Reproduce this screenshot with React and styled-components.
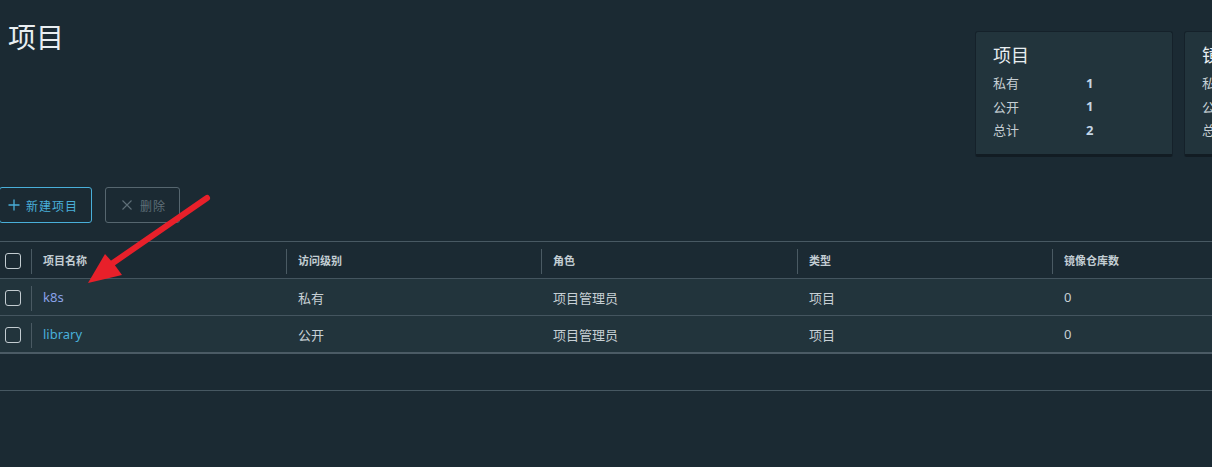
import React from 'react';
import styled, { createGlobalStyle } from 'styled-components';

const GlobalStyle = createGlobalStyle`
  html, body {
    margin: 0;
    background: #1b2a33;
    overflow: hidden;
  }
  body {
    font-family: "Noto Sans", "Noto Sans CJK SC", sans-serif;
  }
`;

const Page = styled.div`
  position: relative;
  width: 1212px;
  height: 467px;
  overflow: hidden;
`;

const TopSection = styled.div`
  display: grid;
  grid-template-columns: 975px auto;
  height: 187px;
`;

const Title = styled.h1`
  margin: 18px 0 0 8px;
  font-size: 28px;
  font-weight: 400;
  line-height: 36px;
  color: #e9eef1;
  font-family: "Noto Sans CJK SC", sans-serif;
`;

const Cards = styled.div`
  display: flex;
  gap: 11px;
  padding-top: 31px;
  align-items: flex-start;
`;

const Card = styled.div`
  box-sizing: border-box;
  width: 198px;
  height: 126px;
  flex-shrink: 0;
  padding: 10px 17px 0;
  background: #22343c;
  border: 1px solid #15212a;
  border-bottom: 3px solid #121c23;
  border-radius: 3px;
`;

const CardTitle = styled.div`
  font-family: "Noto Sans CJK SC", sans-serif;
  font-size: 18px;
  line-height: 24px;
  color: #e9eef1;
  margin-bottom: 5px;
`;

const StatRow = styled.div`
  display: grid;
  grid-template-columns: 93px auto;
  height: 23.5px;
  align-items: center;
  font-size: 13px;
  color: #c5ced3;
`;

const StatLabel = styled.span`
  font-family: "Noto Sans CJK SC", sans-serif;
`;

const StatValue = styled.span`
  font-weight: 700;
  color: #c4d6e6;
`;

const Toolbar = styled.div`
  display: flex;
  gap: 13px;
  margin-left: -1px;
  height: 36px;
`;

const Button = styled.button`
  box-sizing: border-box;
  height: 36px;
  display: flex;
  align-items: center;
  gap: ${(p) => (p.$disabled ? '8px' : '6px')};
  padding: 0 13px 0 ${(p) => (p.$disabled ? '16px' : '8px')};
  background: transparent;
  border: 1px solid ${(p) => (p.$disabled ? '#56666f' : '#49afd9')};
  border-radius: 3px;
  color: ${(p) => (p.$disabled ? '#5f6f78' : '#49afd9')};
  font-family: "Noto Sans CJK SC", sans-serif;
  font-size: 12px;
  letter-spacing: 1px;
  cursor: pointer;
`;

const Table = styled.div`
  margin-top: 18px;
  border-top: 1px solid #485963;
`;

const Row = styled.div`
  display: grid;
  grid-template-columns: 31px 255px 255px 256px 255px 1fr;
  height: 36px;
  background: ${(p) => (p.$header ? '#1b2a33' : '#22343c')};
  border-bottom: ${(p) => (p.$last ? '2px solid #4b5b65' : '1px solid #44555f')};
`;

const Cell = styled.div`
  position: relative;
  display: flex;
  align-items: center;
  padding-left: 12px;
  font-size: ${(p) => (p.$header ? '11px' : '13px')};
  font-weight: ${(p) => (p.$header ? 700 : 400)};
  color: ${(p) => p.$color || (p.$header ? '#c3ced4' : '#c7d0d5')};
  white-space: nowrap;

  &::before {
    content: ${(p) => (p.$divider ? '""' : 'none')};
    position: absolute;
    left: 0;
    top: 7px;
    bottom: 4px;
    width: 1px;
    background: #4a5a63;
  }
`;

const CheckCell = styled.div`
  display: flex;
  align-items: center;
  padding: 2px 0 0 5px;
`;

const Checkbox = styled.span`
  box-sizing: border-box;
  width: 16px;
  height: 16px;
  border: 1px solid #c3ccd1;
  border-radius: 3px;
`;

const Footer = styled.div`
  height: 36px;
  border-bottom: 1px solid #475862;
`;

const Arrow = styled.svg`
  position: absolute;
  left: 0;
  top: 0;
  pointer-events: none;
`;

const columns = ['项目名称', '访问级别', '角色', '类型', '镜像仓库数'];

const rows = [
  { name: 'k8s', color: '#8aa2e8', access: '私有', role: '项目管理员', type: '项目', repos: '0' },
  { name: 'library', color: '#49afd9', access: '公开', role: '项目管理员', type: '项目', repos: '0' },
];

const stats = [
  {
    title: '项目',
    items: [
      ['私有', '1'],
      ['公开', '1'],
      ['总计', '2'],
    ],
  },
  {
    title: '镜像仓库',
    items: [
      ['私有', '0'],
      ['公开', '2'],
      ['总计', '2'],
    ],
  },
];

const PlusIcon = () => (
  <svg width="12" height="12" viewBox="0 0 12 12">
    <path d="M6 0.5v11M0.5 6h11" stroke="#49afd9" strokeWidth="1.3" fill="none" />
  </svg>
);

const CloseIcon = () => (
  <svg width="10" height="10" viewBox="0 0 10 10">
    <path d="M0.5 0.5l9 9M9.5 0.5l-9 9" stroke="#5f6f78" strokeWidth="1.1" fill="none" />
  </svg>
);

export default function App() {
  return (
    <Page>
      <GlobalStyle />
      <TopSection>
        <Title>项目</Title>
        <Cards>
          {stats.map((s) => (
            <Card key={s.title}>
              <CardTitle>{s.title}</CardTitle>
              {s.items.map(([label, value]) => (
                <StatRow key={label}>
                  <StatLabel>{label}</StatLabel>
                  <StatValue>{value}</StatValue>
                </StatRow>
              ))}
            </Card>
          ))}
        </Cards>
      </TopSection>

      <Toolbar>
        <Button>
          <PlusIcon />
          新建项目
        </Button>
        <Button $disabled>
          <CloseIcon />
          删除
        </Button>
      </Toolbar>

      <Table>
        <Row $header>
          <CheckCell>
            <Checkbox />
          </CheckCell>
          {columns.map((c) => (
            <Cell key={c} $header $divider>
              {c}
            </Cell>
          ))}
        </Row>
        {rows.map((r, i) => (
          <Row key={r.name} $last={i === rows.length - 1}>
            <CheckCell>
              <Checkbox />
            </CheckCell>
            <Cell $divider $color={r.color}>{r.name}</Cell>
            <Cell>{r.access}</Cell>
            <Cell>{r.role}</Cell>
            <Cell>{r.type}</Cell>
            <Cell>{r.repos}</Cell>
          </Row>
        ))}
        <Footer />
      </Table>

      <Arrow width="1212" height="467" viewBox="0 0 1212 467">
        <line x1="207" y1="198" x2="110" y2="265" stroke="#e8202a" strokeWidth="6" strokeLinecap="round" />
        <polygon points="88,283 105,254 114,264 122,275" fill="#e8202a" />
      </Arrow>
    </Page>
  );
}
